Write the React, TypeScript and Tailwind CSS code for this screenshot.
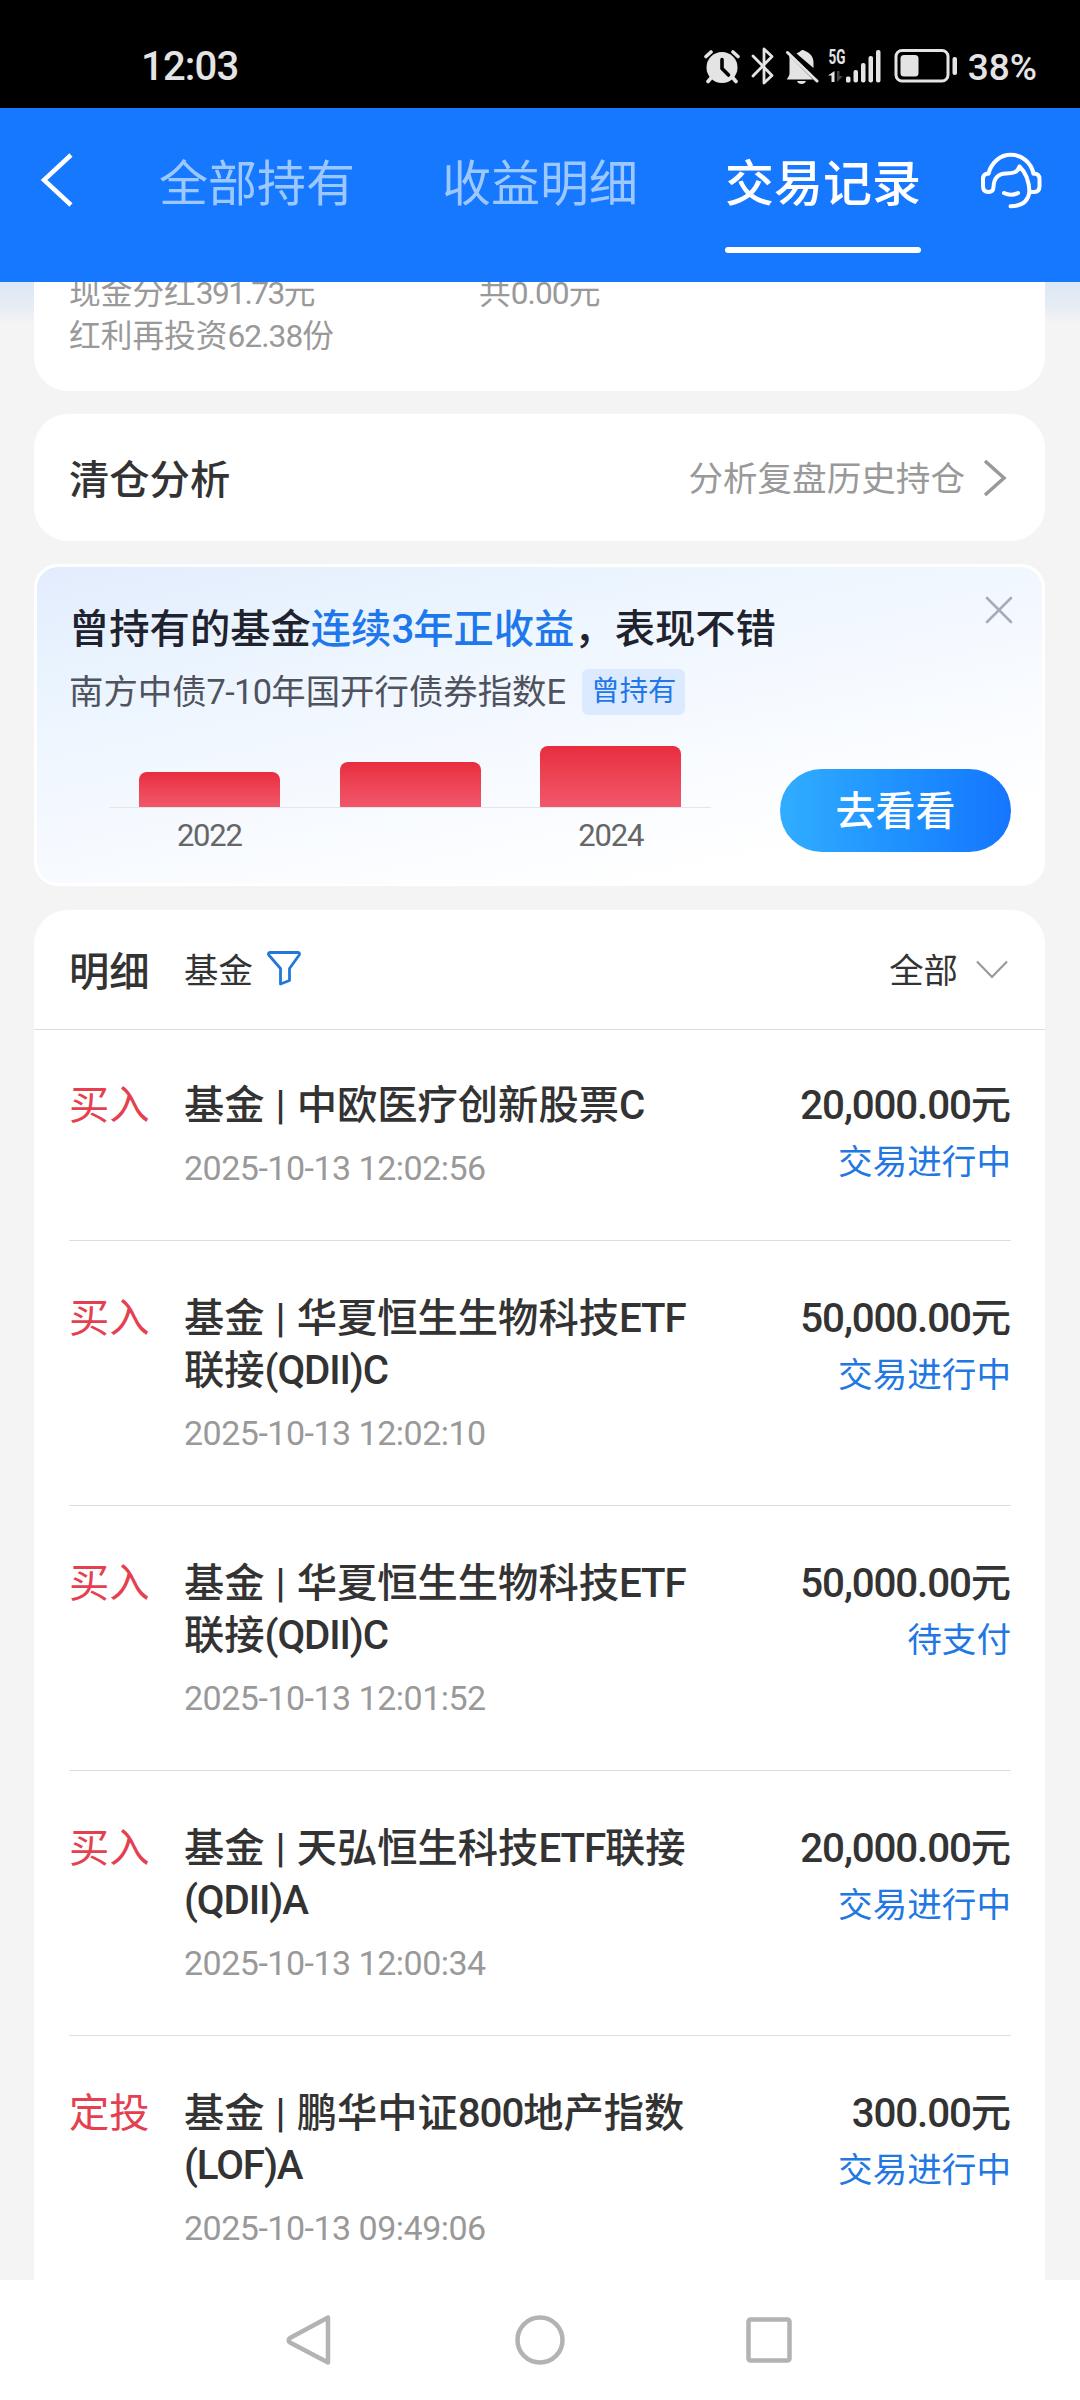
import { Fragment } from 'react';

type Trade = {
  type: string;
  name: string;
  time: string;
  amount: string;
  status: string;
};

const tabs = ['全部持有', '收益明细', '交易记录'];

const years = [
  { label: '2022', height: 'h-[35px]' },
  { label: '', height: 'h-[45px]' },
  { label: '2024', height: 'h-[61px]' },
];

const trades: Trade[] = [
  { type: '买入', name: '基金 | 中欧医疗创新股票C', time: '2025-10-13 12:02:56', amount: '20,000.00', status: '交易进行中' },
  { type: '买入', name: '基金 | 华夏恒生生物科技ETF\n联接(QDII)C', time: '2025-10-13 12:02:10', amount: '50,000.00', status: '交易进行中' },
  { type: '买入', name: '基金 | 华夏恒生生物科技ETF\n联接(QDII)C', time: '2025-10-13 12:01:52', amount: '50,000.00', status: '待支付' },
  { type: '买入', name: '基金 | 天弘恒生科技ETF联接\n(QDII)A', time: '2025-10-13 12:00:34', amount: '20,000.00', status: '交易进行中' },
  { type: '定投', name: '基金 | 鹏华中证800地产指数\n(LOF)A', time: '2025-10-13 09:49:06', amount: '300.00', status: '交易进行中' },
];

// Tightens latin letters and digits that sit between Chinese characters
function Mixed({ text, className = 'tracking-[-0.028em]' }: { text: string; className?: string }) {
  return (
    <>
      {text.split(/([A-Za-z0-9.,()-]+)/).map((part, i) =>
        i % 2 ? (
          <span key={i} className={className}>{part}</span>
        ) : (
          <Fragment key={i}>{part}</Fragment>
        )
      )}
    </>
  );
}

function StatusBar() {
  return (
    <div className="h-[108px] bg-black flex items-start justify-between pl-[141px] pr-[43px] pt-[43px] text-[#e4e4e4]">
      <span className="text-[40px] leading-[48px] font-medium tracking-[-0.800px]">12:03</span>
      <div className="flex items-center h-[46px]">
        {/* alarm */}
        <svg className="w-9 h-9" viewBox="0 0 36 36" fill="none">
          <circle cx="18" cy="19.5" r="15.5" fill="#e4e4e4" />
          <path d="M2 8.5 7 4M34 8.5 29 4" stroke="#e4e4e4" strokeWidth="3.6" strokeLinecap="round" />
          <path d="M7 30 4 33.5M29 30l3 3.5" stroke="#e4e4e4" strokeWidth="3.6" strokeLinecap="round" />
          <path d="M18 11.5v9l6.5 6.5" stroke="#000" strokeWidth="3.6" strokeLinecap="round" strokeLinejoin="round" />
        </svg>
        {/* bluetooth */}
        <svg className="w-6 h-[38px] ml-[11px]" viewBox="0 0 24 38" fill="none" stroke="#e4e4e4" strokeWidth="2.8" strokeLinecap="round" strokeLinejoin="round">
          <path d="M2 9l19 19.5-8 7.5V2l8 7.5L2 29" />
        </svg>
        {/* muted bell */}
        <svg className="w-[34px] h-9 ml-[10px]" viewBox="0 0 34 36">
          <path d="M4.5 8 28 31.5H2c0-1.600 2.500-3 2.500-6V15c0-3 .3-5-.5-7Z" fill="#e4e4e4" />
          <path d="M11.500 5.500c2-1.300 3-1.500 4-2.500 1.500-1.200 3-1.200 4.500 0 5 1.700 8.500 6 8.500 11v6Z" fill="#e4e4e4" />
          <path d="M12 33h9c-.8 2-2.300 3-4.500 3S12.800 35 12 33Z" fill="#e4e4e4" />
          <path d="M2.500 4.500 32 33" stroke="#e4e4e4" strokeWidth="3" strokeLinecap="round" />
        </svg>
        {/* 5G signal */}
        <svg className="w-[54px] h-9 ml-[9px] overflow-visible" viewBox="0 0 54 36" fill="#e4e4e4">
          <text x="0.500" y="16" fontSize="20" fontWeight="700" textLength="17" lengthAdjust="spacingAndGlyphs">5G</text>
          <path d="M6.500 23v11H3.500v-6.500H0Z" />
          <path d="M9 23v11l6-6h-3.500v-5Z" fill="#444" />
          <rect x="18" y="28.500" width="4.500" height="6" rx="1.500" />
          <rect x="25.500" y="22" width="4.500" height="12.500" rx="2" />
          <rect x="33" y="15" width="4.500" height="19.500" rx="2" />
          <rect x="40.500" y="8" width="4.500" height="26.500" rx="2" />
          <rect x="48" y="2" width="4.500" height="32.500" rx="2" />
        </svg>
        {/* battery */}
        <svg className="w-[64px] h-9 ml-[12px]" viewBox="0 0 64 36">
          <rect x="2" y="2.500" width="52" height="30.500" rx="6" fill="none" stroke="#e4e4e4" strokeWidth="3" />
          <rect x="6.500" y="7" width="18" height="21.500" rx="3.500" fill="#e4e4e4" />
          <rect x="58.500" y="9" width="4.500" height="18" rx="2" fill="#e4e4e4" />
        </svg>
        <span className="mt-[3px] text-[37px] leading-[46px] font-medium ml-[10px]">38%</span>
      </div>
    </div>
  );
}

function Header() {
  return (
    <div className="h-[174px] bg-[#1677ff] flex items-start pl-10 pr-[38px]">
      <svg className="w-9 h-14 mt-11" viewBox="0 0 36 56" fill="none" stroke="#fff" strokeWidth="4.500">
        <path d="M31 3 4 28l27 25" />
      </svg>
      <div className="flex gap-[87px] ml-[83px]">
        {tabs.map((tab, i) => (
          <div key={tab} className="relative h-[146px] pt-[45px]">
            <span className={`block text-[49px] leading-[64px] ${i === 2 ? 'text-white font-medium' : 'text-[#9cc8ff]'}`}>{tab}</span>
            {i === 2 && <div className="absolute inset-x-0 bottom-[1px] h-[6px] rounded-full bg-white" />}
          </div>
        ))}
      </div>
      <svg className="w-[62px] h-[60px] mt-[43px] ml-auto" viewBox="0 0 62 60" fill="none" stroke="#fff" strokeWidth="4" strokeLinecap="round" strokeLinejoin="round">
        <path d="M8.500 22.500C11.500 11 20.500 3.800 31 3.800S51 11 53.500 22.500" />
        <path d="M8.500 22.500C4.500 22.500 3 25 3 28v7c0 3.700 2 6 5.500 6s5-2 5-5c.3-9 5-13.500 12.500-13.500 7 0 11.500-1 13.500-7 6 5.500 9.500 13 10 25.500h4.500c3.500 0 5.500-2.300 5.500-6v-7c0-3.500-1.500-5.500-6-5.500" />
        <path d="M49.500 41C48 50.500 41.500 55.300 30.500 55.300" />
        <path d="M24 42c4.500 2.200 9.500 2.200 14 0" />
      </svg>
    </div>
  );
}

function Banner() {
  return (
    <div className="relative mt-[23px] h-[322px] rounded-[24px] border-[3px] border-white bg-[linear-gradient(168deg,#e3ecfd_0%,#eaf4fe_22%,#f5f9ff_52%,#ffffff_85%)] pl-8 pr-[33px]">
      <svg className="absolute right-[28px] top-[28px] w-[30px] h-[30px]" viewBox="0 0 30 30" stroke="#a3adbb" strokeWidth="2.600" strokeLinecap="round">
        <path d="M3 3l24 24M27 3 3 27" />
      </svg>
      <h2 className="pt-[37px] text-[40.300px] leading-[52px] font-medium text-[#20222e]">
        曾持有的基金<span className="text-[#1f78eb]"><Mixed text="连续3年正收益" /></span>，表现不错
      </h2>
      <div className="flex items-center mt-[13px] h-[46px]">
        <span className="text-[34.400px] leading-[46px] text-[#50535e]"><Mixed text="南方中债7-10年国开行债券指数E" className="tracking-[-0.020em]" /></span>
        <span className="ml-[17px] h-[46px] px-[9px] rounded-[6px] bg-[#dbeafe] text-[#2277e8] text-[28.300px] leading-[45px]">曾持有</span>
      </div>
      <div className="flex justify-between mt-[31px]">
        <div className="ml-10 w-[602px]">
          <div className="flex items-end h-[62px] border-b border-[#e5e6ea]">
            {years.map((year, i) => (
              <div key={i} className="flex-1 flex justify-center">
                <div className={`w-[141px] rounded-t-[8px] bg-linear-to-b from-[#e82c3e] to-[#f2566b] ${year.height}`} />
              </div>
            ))}
          </div>
          <div className="flex mt-[8px]">
            {years.map((year, i) => (
              <span key={i} className="flex-1 text-center text-[31px] leading-[40px] tracking-[-1.200px] text-[#666]">{year.label}</span>
            ))}
          </div>
        </div>
        <button className="w-[231px] h-[83px] mt-[23px] -mr-[2px] pt-[3px] rounded-full bg-linear-to-r from-[#31adff] to-[#1675ff] text-white text-[40px] leading-[80px] font-medium">
          去看看
        </button>
      </div>
    </div>
  );
}

function TradeRow({ trade, first, last }: { trade: Trade; first: boolean; last: boolean }) {
  return (
    <div className={`flex ml-[35px] mr-[34px] pb-[48px] ${first ? 'pt-[50px]' : 'pt-[52px]'} ${last ? '' : 'border-b border-[#dedede]'}`}>
      <div className="w-[115px] text-[40.300px] leading-[52px] text-[#e5404f]">{trade.type}</div>
      <div className="flex-1">
        <div className="text-[40.300px] leading-[52px] font-medium whitespace-pre-line [word-spacing:1px]"><Mixed text={trade.name} /></div>
        <div className="mt-[12px] text-[34px] leading-[48px] tracking-[-0.500px] text-[#999]">{trade.time}</div>
      </div>
      <div className="text-right">
        <div className="text-[40.300px] leading-[52px] font-medium"><Mixed text={trade.amount + '元'} /></div>
        <div className="mt-[6px] text-[34.600px] leading-[48px] text-[#2277e3]">{trade.status}</div>
      </div>
    </div>
  );
}

function NavBar() {
  return (
    <div className="h-[120px] bg-white flex items-center justify-between px-[284px]">
      <svg className="w-[50px] h-[54px]" viewBox="0 0 50 54" fill="none" stroke="#b3b3b3" strokeWidth="4.500" strokeLinejoin="round">
        <path d="M44 4.500v45L6 29.500c-1.800-1.200-1.800-3.200 0-4.500Z" />
      </svg>
      <svg className="w-[54px] h-[54px] ml-[3px]" viewBox="0 0 54 54" fill="none" stroke="#b3b3b3" strokeWidth="4.500">
        <circle cx="27" cy="27" r="22.500" />
      </svg>
      <svg className="w-[54px] h-[54px]" viewBox="0 0 54 54" fill="none" stroke="#b3b3b3" strokeWidth="4.500">
        <rect x="6.500" y="6.500" width="41" height="41" rx="2" />
      </svg>
    </div>
  );
}

export default function App() {
  return (
    <div className="w-[1080px] h-[2400px] flex flex-col overflow-hidden bg-[#f4f4f4] text-[#333] font-[Roboto,'Noto_Sans_CJK_SC',sans-serif]">
      <StatusBar />
      <Header />
      <main className="flex-1 min-h-0 overflow-hidden pl-[34px] pr-[35px] bg-[linear-gradient(180deg,#dce8f7_0px,#e4ebf5_20px,#f4f4f4_42px)]">
        {/* scrolled half under the header */}
        <div className="h-[109px] rounded-b-[34px] bg-white overflow-hidden flex px-[35px] text-[31.700px] leading-[43px] text-[#999]">
          <div className="w-[410px] -mt-[10px]">
            <div><Mixed text="现金分红391.73元" className="tracking-[-0.050em]" /></div>
            <div><Mixed text="红利再投资62.38份" className="tracking-[-0.030em]" /></div>
          </div>
          <div className="-mt-[10px]"><Mixed text="共0.00元" className="tracking-[-0.030em]" /></div>
        </div>

        <div className="mt-[23px] h-[127px] rounded-[34px] bg-white flex items-center pl-[35px] pr-[38px]">
          <span className="pt-[7px] text-[40.300px] font-medium">清仓分析</span>
          <span className="pt-[4px] ml-auto text-[34.600px] text-[#999]">分析复盘历史持仓</span>
          <svg className="w-6 h-9 ml-[18px]" viewBox="0 0 24 36" fill="none" stroke="#999" strokeWidth="3.500">
            <path d="M2 1l19 17L2 35" />
          </svg>
        </div>

        <Banner />

        <div className="mt-[24px] rounded-t-[34px] bg-white">
          <div className="h-[120px] flex items-center px-[35px] border-b border-[#dedede]">
            <span className="w-[115px] pt-[8px] text-[40.300px] font-medium">明细</span>
            <span className="pt-[5px] text-[34.400px]">基金</span>
            <svg className="w-9 h-9 ml-[13px] -mt-[3px]" viewBox="0 0 36 36" fill="none" stroke="#2277db" strokeWidth="2.800" strokeLinejoin="round">
              <path d="M4 2.500h28c1.500 0 2 1.300 1.200 2.500L23.500 18.500v12l-9 3.500V18.500L2.800 5C2 3.800 2.500 2.500 4 2.500Z" />
            </svg>
            <span className="pt-[5px] ml-auto text-[34.400px]">全部</span>
            <svg className="w-8 h-5 ml-[18px] mr-[2px]" viewBox="0 0 32 20" fill="none" stroke="#999" strokeWidth="2.200">
              <path d="M1 1.500 16 17 31 1.500" />
            </svg>
          </div>
          {trades.map((trade, i) => (
            <TradeRow key={trade.time} trade={trade} first={i === 0} last={i === trades.length - 1} />
          ))}
        </div>
      </main>
      <NavBar />
    </div>
  );
}
